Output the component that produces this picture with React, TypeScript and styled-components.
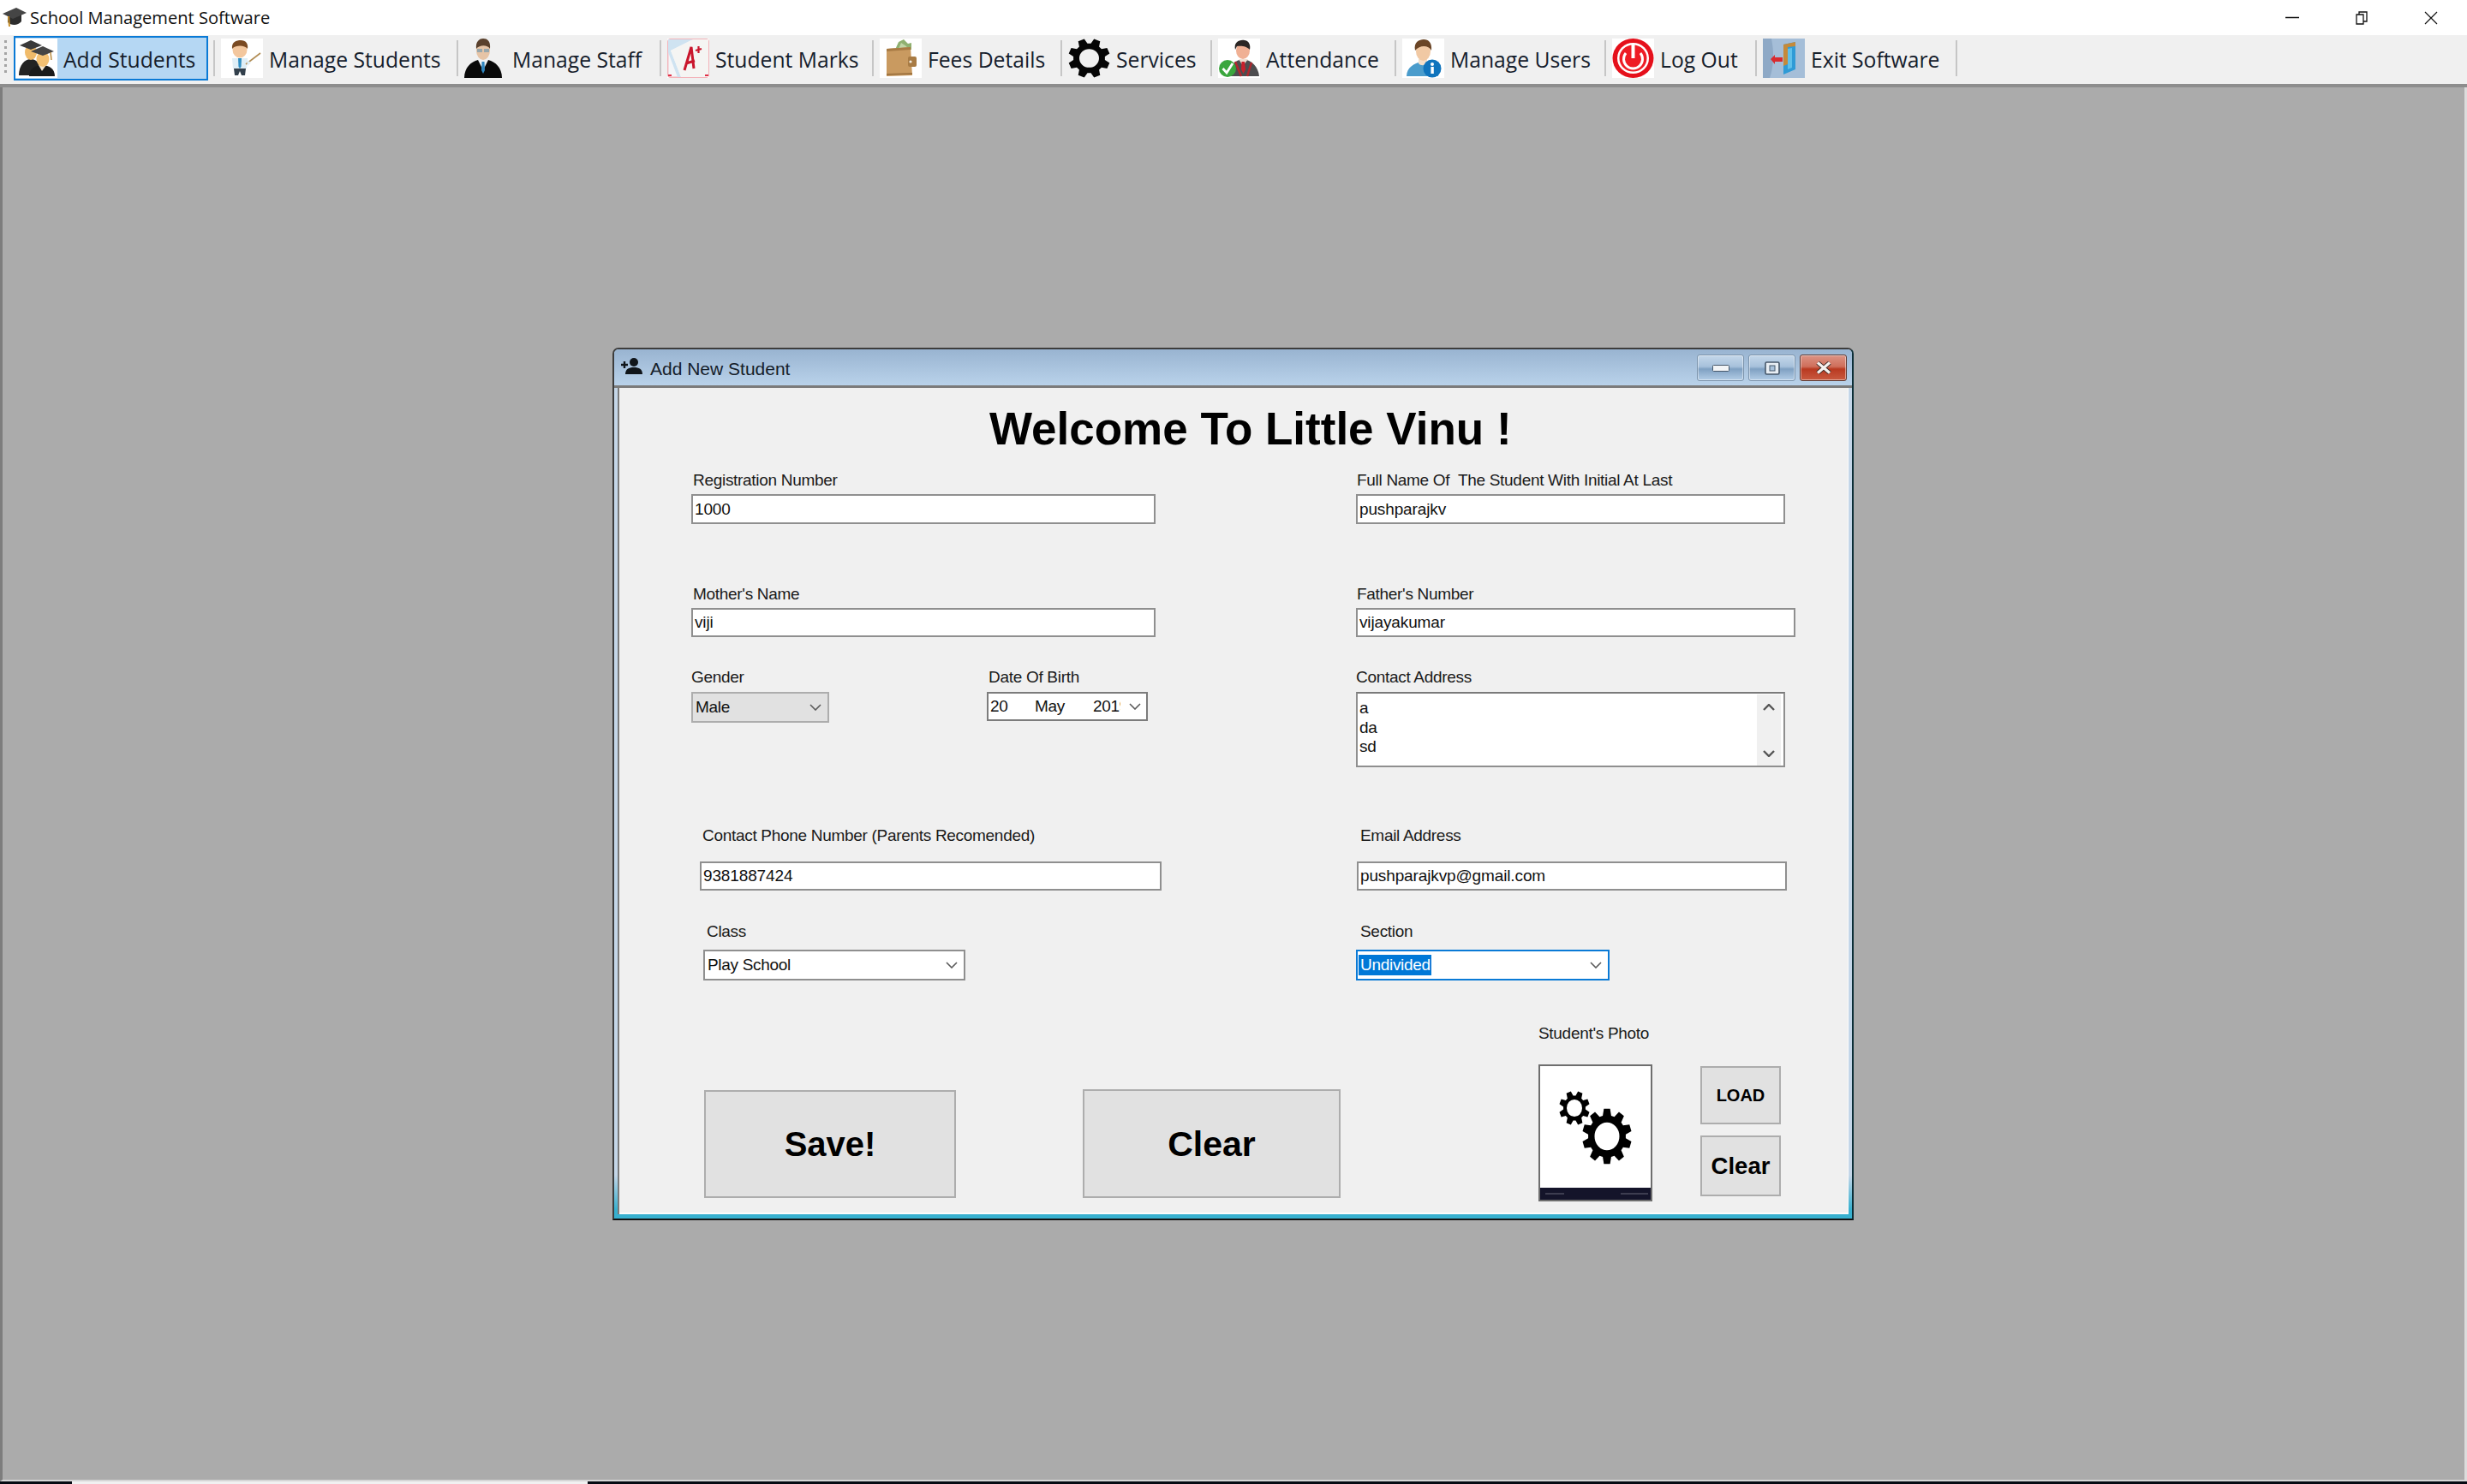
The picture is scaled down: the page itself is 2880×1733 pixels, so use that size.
import React from 'react'
import styled, { createGlobalStyle } from 'styled-components'

const GlobalStyle = createGlobalStyle`
    html, body {
        margin: 0;
        padding: 0;
        background: #ababab;
    }
    * {
        box-sizing: border-box;
    }
`;

const UI_FONT = `"Liberation Sans", Arial, sans-serif`;
const BAR_FONT = `"Open Sans", "Noto Sans", sans-serif`;

const Screen = styled.div`
    display: flex;
    flex-direction: column;
    width: 2880px;
    height: 1733px;
    overflow: hidden;
    font-family: ${UI_FONT};
`;

const AppTitleBar = styled.div`
    display: flex;
    align-items: center;
    height: 41px;
    flex: none;
    background: #fff;
    padding-left: 2px;
`;

const AppTitle = styled.span`
    font-family: ${BAR_FONT};
    font-size: 20.1px;
    margin-left: 3px;
    color: #111;
    white-space: nowrap;
`;

const AppControls = styled.div`
    display: flex;
    align-items: center;
    gap: 66px;
    margin-left: auto;
    margin-right: 34px;
`;

const Toolbar = styled.div`
    display: flex;
    align-items: center;
    flex: none;
    height: 61px;
    padding: 0 0 4px 5px;
    background: #f0f0f0;
    border-bottom: 4px solid #8d8d8d;
`;

const Grip = styled.div`
    width: 3px;
    height: 42px;
    margin-right: 8px;
    background: repeating-linear-gradient(to bottom, #a4a4a4 0 3px, transparent 3px 7px);
`;

const ToolButton = styled.div<{ $active?: boolean }>`
    display: flex;
    align-items: center;
    height: 52px;
    padding: 0 14px 0 2px;
    background: ${(p) => (p.$active ? '#b5d7f3' : 'transparent')};
    box-shadow: ${(p) => (p.$active ? 'inset 0 0 0 2px #0a7ad6' : 'none')};
`;

const ToolIcon = styled.div<{ $plain?: boolean }>`
    width: 49px;
    height: 46px;
    flex: none;
    background: ${(p) => (p.$plain ? 'transparent' : '#fff')};

    svg {
        display: block;
    }
`;

const ToolLabel = styled.span<{ $w: number }>`
    width: ${(p) => p.$w}px;
    margin-left: 7px;
    padding-top: 4px;
    font-family: ${BAR_FONT};
    font-size: 24.7px;
    color: #16202c;
    white-space: nowrap;
`;

const ToolSeparator = styled.div`
    width: 2px;
    height: 42px;
    margin: 0 5px 0 6px;
    flex: none;
    background: #c6c6c6;
`;

const Desk = styled.div`
    flex: 1;
    min-height: 0;
    padding: 304px 0 0 712px;
    background: #ababab;
    border-left: 3px solid #7d7d7d;
    border-right: 3px solid #dcdcdc;
    border-bottom: 2px solid #d6d6d6;
`;

const BottomStrip = styled.div`
    display: flex;
    height: 3px;
    flex: none;
`;

const StripPart = styled.div<{ $w?: number; $light?: boolean }>`
    width: ${(p) => (p.$w ? `${p.$w}px` : 'auto')};
    flex: ${(p) => (p.$w ? 'none' : '1')};
    background: ${(p) => (p.$light ? '#f1f1f1' : '#050a12')};
`;

const ChildWindow = styled.div`
    display: flex;
    flex-direction: column;
    width: 1449px;
    height: 1019px;
    padding: 0 4px 5px;
    border: 2px solid #3d3d3d;
    border-right-color: #0c2f38;
    border-bottom-color: #111;
    border-radius: 7px 7px 0 0;
    background: linear-gradient(to bottom, #c4d6e8 0, #c4d6e8 95%, #37b0cf 99%);
`;

const ChildTitleBar = styled.div`
    display: flex;
    align-items: flex-start;
    flex: none;
    height: 45px;
    margin: 0 -4px;
    padding: 6px 6px 0 7px;
    background: linear-gradient(to bottom, #99b4d1, #b9d2ea);
    border-bottom: 3px solid #7b7b7b;
    border-radius: 5px 5px 0 0;

    > svg {
        margin-top: 3px;
    }
`;

const ChildTitle = styled.span`
    margin: 5px 0 0 9px;
    font-size: 21px;
    color: #15202a;
`;

const CaptionGroup = styled.div`
    display: flex;
    gap: 5px;
    margin-left: auto;
`;

const CaptionButton = styled.div<{ $close?: boolean }>`
    display: flex;
    align-items: center;
    justify-content: center;
    width: 55px;
    height: 31px;
    border: 1px solid ${(p) => (p.$close ? '#5f3a33' : '#7d95ad')};
    border-radius: 3px;
    background: ${(p) =>
        p.$close
            ? 'linear-gradient(to bottom, #dc9384 0, #cf6f5b 45%, #b93a21 55%, #c95a40 100%)'
            : 'linear-gradient(to bottom, #c4d7ea 0, #a7c1db 45%, #7fa0c2 55%, #b3cde6 100%)'};
    box-shadow: inset 0 0 0 1px rgba(255, 255, 255, 0.45);
`;

const Client = styled.div`
    flex: 1;
    min-height: 0;
    background: #f0f0f0;
    box-shadow: inset 2px 0 0 #7b7b7b, inset -1px -2px 0 #fbfbfb;
`;

const Heading = styled.h1`
    height: 60px;
    margin: 18px 0 0;
    padding-left: 434px;
    font-size: 53px;
    font-weight: 700;
    line-height: 60px;
    color: #000;
    white-space: nowrap;
`;

const FormRow = styled.div<{ $top: number }>`
    display: grid;
    grid-template-columns: 862px 1fr;
    margin-top: ${(p) => p.$top}px;
`;

const ActionRow = styled.div<{ $top: number }>`
    display: flex;
    align-items: flex-start;
    margin-top: ${(p) => p.$top}px;
`;

const SplitCell = styled.div`
    display: flex;
    align-items: flex-start;
`;

const Field = styled.div<{ $x?: number; $gap?: number }>`
    display: flex;
    flex-direction: column;
    align-items: flex-start;
    gap: ${(p) => p.$gap ?? 6}px;
    margin-left: ${(p) => p.$x ?? 0}px;
`;

const FieldLabel = styled.label<{ $indent?: number }>`
    height: 20px;
    padding-left: ${(p) => p.$indent ?? 2}px;
    font-size: 19px;
    letter-spacing: -0.3px;
    line-height: 20px;
    color: #1a1a1a;
    white-space: pre;
`;

const TextBox = styled.div<{ $w: number; $h?: number }>`
    display: flex;
    align-items: center;
    width: ${(p) => p.$w}px;
    height: ${(p) => p.$h ?? 34}px;
    padding-left: 2px;
    background: #fff;
    border: 2px solid #8f8f8f;
    font-size: 19px;
    letter-spacing: -0.13px;
    color: #111;
    white-space: nowrap;
`;

const ComboBox = styled.div<{ $w: number; $disabled?: boolean; $focused?: boolean }>`
    display: flex;
    align-items: center;
    justify-content: space-between;
    width: ${(p) => p.$w}px;
    height: 36px;
    padding: 0 7px 0 1px;
    background: ${(p) => (p.$disabled ? '#e1e1e1' : '#fff')};
    border: 2px solid ${(p) => (p.$focused ? '#0a7ad6' : p.$disabled ? '#adadad' : '#8f8f8f')};
    font-size: 19px;
    letter-spacing: -0.3px;
    color: #111;
`;

const ComboText = styled.span<{ $selected?: boolean }>`
    padding: 0 1px 0 2px;
    line-height: 24px;
    background: ${(p) => (p.$selected ? '#0078d7' : 'transparent')};
    color: ${(p) => (p.$selected ? '#fff' : '#111')};
`;

const DatePicker = styled.div`
    display: flex;
    align-items: center;
    width: 188px;
    height: 34px;
    padding-left: 2px;
    background: #fff;
    border: 2px solid #7c7c7c;
    font-size: 19px;
    letter-spacing: -0.3px;
    color: #111;
`;

const DatePart = styled.span<{ $w: number }>`
    width: ${(p) => p.$w}px;
    flex: none;
    overflow: hidden;
    white-space: nowrap;
`;

const DateArrow = styled.span`
    display: flex;
    margin-left: 10px;
`;

const MemoBox = styled.div`
    display: flex;
    width: 501px;
    height: 88px;
    background: #fff;
    border: 2px solid #8f8f8f;
    border-top-color: #7a7a7a;
`;

const MemoText = styled.div`
    flex: 1;
    padding: 6px 0 0 2px;
    font-size: 19px;
    letter-spacing: -0.3px;
    line-height: 22.5px;
    color: #111;
`;

const MemoScroll = styled.div`
    display: flex;
    flex-direction: column;
    align-items: center;
    justify-content: space-between;
    width: 28px;
    margin: 1px 3px 0 0;
    padding: 11px 0 10px;
    background: #f0f0f0;
`;

const PushButton = styled.div<{ $w: number; $h: number; $size: number; $top?: number; $left?: number }>`
    display: flex;
    align-items: center;
    justify-content: center;
    flex: none;
    width: ${(p) => p.$w}px;
    height: ${(p) => p.$h}px;
    margin-top: ${(p) => p.$top ?? 0}px;
    margin-left: ${(p) => p.$left ?? 0}px;
    padding-top: 1px;
    background: #e1e1e1;
    border: 2px solid #adadad;
    font-size: ${(p) => p.$size}px;
    font-weight: 700;
    color: #000;
`;

const PhotoColumn = styled.div`
    display: flex;
    flex-direction: column;
    gap: 26px;
    margin-left: 231px;
`;

const PhotoFrame = styled.div`
    display: flex;
    flex-direction: column;
    width: 133px;
    height: 160px;
    background: #fff;
    border: 2px solid #6e6e6e;
`;

const PhotoArt = styled.div`
    flex: 1;
    min-height: 0;

    svg {
        display: block;
    }
`;

const PhotoFooter = styled.div`
    display: flex;
    align-items: center;
    justify-content: space-between;
    height: 14px;
    flex: none;
    padding: 0 3px 0 6px;
    background: #14142a;
`;

const FooterMark = styled.div<{ $w: number }>`
    width: ${(p) => p.$w}px;
    height: 2px;
    background: #3d3d50;
`;

const ButtonStack = styled.div`
    display: flex;
    flex-direction: column;
    gap: 13px;
    margin-left: 56px;
    margin-top: 48px;
`;

// icons

const gearPath = (cx: number, cy: number, ro: number, ri: number, hole: number, teeth: number, sy = 1) => {
    const pts: string[] = [];
    const step = (Math.PI * 2) / teeth;
    const at = (r: number, a: number) =>
        `${(cx + r * Math.cos(a)).toFixed(2)} ${(cy + r * sy * Math.sin(a)).toFixed(2)}`;
    for (let i = 0; i < teeth; i++) {
        const a = i * step + step / 2;
        pts.push(at(ri, a - step * 0.36), at(ro, a - step * 0.2), at(ro, a + step * 0.2), at(ri, a + step * 0.36));
    }
    const ry = hole * sy;
    return `M${pts.join('L')}Z M${cx - hole} ${cy}A${hole} ${ry} 0 1 0 ${cx + hole} ${cy}A${hole} ${ry} 0 1 0 ${cx - hole} ${cy}Z`;
};

const GradCapIcon = () => (
    <svg width="30" height="28" viewBox="0 0 30 28">
        <path d="M7 10 L7 19 C11 23 19 23 23 18 L23 9 Z" fill="#2d2d2d" />
        <path d="M1 9 L17 2 L29 8 L13 15 Z" fill="#454545" />
        <path d="M8 12 L9 24" stroke="#c8912e" strokeWidth="2" />
    </svg>
);

const AddStudentsIcon = () => (
    <svg width="49" height="46" viewBox="0 0 49 46">
        <path d="M4 43 C4 31 11 24 18 24 C25 24 31 31 31 43 Z" fill="#232323" />
        <ellipse cx="18" cy="16" rx="7" ry="9" fill="#f0bb6a" />
        <path d="M5 8 L18 2 L31 8 L18 13 Z" fill="#3a3a3a" />
        <path d="M16 44 C16 36 23 31 31 31 C40 31 46 36 46 44 Z" fill="#1b1b1b" />
        <path d="M27 31 L31 38 L36 31 Z" fill="#f6e7cf" />
        <ellipse cx="32" cy="24" rx="7.5" ry="9" fill="#f4c173" />
        <path d="M18 15 L32 9 L45 15 L32 20 Z" fill="#454545" />
        <path d="M41 16 L42 25" stroke="#b98a3c" strokeWidth="1.5" />
    </svg>
);

const TeacherIcon = () => (
    <svg width="49" height="46" viewBox="0 0 49 46">
        <path d="M13 23 L31 23 L30 35 L14 35 Z" fill="#dfeef6" />
        <path d="M20 23 L24 23 L23.5 33 L22 35 L20.5 33 Z" fill="#2f8fc4" />
        <path d="M15 35 L29 35 L28 43 L24 43 L22 38 L20 43 L16 43 Z" fill="#33404c" />
        <ellipse cx="22" cy="13" rx="8.5" ry="9.5" fill="#f3c79e" />
        <path d="M13 12 C12 4 18 2 23 2 C29 2 32 6 31 12 C28 8 18 7 13 12 Z" fill="#7a4a22" />
        <path d="M29 30 L46 17" stroke="#b28d55" strokeWidth="1.6" />
        <path d="M30 25 L35 28 L31 32 Z" fill="#dfeef6" />
    </svg>
);

const StaffIcon = () => (
    <svg width="49" height="46" viewBox="0 0 49 46">
        <path d="M0 46 C0 34 8 27 16 25 L28 25 C36 27 44 34 44 46 Z" fill="#0a0a0a" />
        <path d="M16 25 L22 37 L28 25 Z" fill="#eef2f5" />
        <path d="M20.5 27 L23.5 27 L24 37 L22 41 L20 37 Z" fill="#2f86c0" />
        <ellipse cx="22" cy="14" rx="8" ry="11" fill="#e6c4a6" />
        <path d="M14 12 C13 3 18 0 22 0 C27 0 31 3 30 12 C27 7 18 7 14 12 Z" fill="#59402c" />
        <rect x="15" y="12" width="6" height="4" fill="#8aa2ad" opacity="0.85" />
        <rect x="23" y="12" width="6" height="4" fill="#8aa2ad" opacity="0.85" />
    </svg>
);

const MarksIcon = () => (
    <svg width="49" height="46" viewBox="0 0 49 46">
        <rect x="0.7" y="0.7" width="47.6" height="44.6" rx="3" fill="#f4f6f8" stroke="#f3b4ba" strokeWidth="1.4" />
        <path d="M1 1 L30 1 L4 14 L16 45 L12 45 L1 16 Z" fill="#cfe3f1" />
        <path d="M4 14 L30 1 L48 1 L48 45 L16 45 Z" fill="#f5f5f3" />
        <path d="M20 37 L28 10 L31 35 M22 29 L32 26" stroke="#c9162c" strokeWidth="3" fill="none" />
        <path d="M33 14 L40 12 M36.5 9 L36.5 17" stroke="#c9162c" strokeWidth="2.2" />
        <path d="M44 43 L48 43 M1 43 L5 43" stroke="#e03047" strokeWidth="2" />
    </svg>
);

const WalletIcon = () => (
    <svg width="49" height="46" viewBox="0 0 49 46">
        <path d="M18 13 L22 4 L28 1 L33 6 L37 5 L37 13 Z" fill="#8fb070" />
        <path d="M22 12 L25 5 L31 9 L33 12 Z" fill="#c0d5a6" />
        <path d="M8 12 L36 10 L38 43 L8 44 Z" fill="#c99a60" />
        <path d="M8 12 L36 10 L36 13 L8 15 Z" fill="#a87b44" />
        <rect x="33" y="21" width="10" height="12" rx="2" fill="#a87b44" />
        <circle cx="36" cy="27" r="1.6" fill="#f2ece0" />
        <path d="M8 42 L38 41" stroke="#9f7440" strokeWidth="2" />
    </svg>
);

const GearIcon = () => (
    <svg width="49" height="46" viewBox="0 0 49 46">
        <path d={gearPath(24.5, 23, 24.5, 18.5, 11.5, 8, 0.94)} fill="#050505" fillRule="evenodd" />
    </svg>
);

const AttendanceIcon = () => (
    <svg width="49" height="46" viewBox="0 0 49 46">
        <path d="M13 44 C13 32 20 25 29 24 C39 25 47 33 48 44 Z" fill="#4d4d4f" />
        <path d="M24 24 L29 32 L35 24 Z" fill="#f1dfd2" />
        <path d="M27.5 27 L31 27 L32 36 L29.5 41 L27 36 Z" fill="#c8202c" />
        <path d="M20 27 L27 44 M39 28 L34 44" stroke="#b0282f" strokeWidth="2.5" />
        <ellipse cx="29" cy="14" rx="8" ry="10" fill="#f0b094" />
        <path d="M20 13 C18 4 25 1 31 2 C37 3 38 9 37 13 C34 9 27 8 22 9 Z" fill="#2b2624" />
        <circle cx="11" cy="35" r="10" fill="#3aa63d" />
        <path d="M5.5 35 L10 40 L17 29" stroke="#fff" strokeWidth="2.8" fill="none" />
    </svg>
);

const UsersIcon = () => (
    <svg width="49" height="46" viewBox="0 0 49 46">
        <path d="M5 44 C5 34 14 28 24 27 C34 28 42 33 42 44 Z" fill="#4a9ccc" />
        <path d="M19 24 L19 29 C21 32 27 32 29 29 L29 24 Z" fill="#f3dfca" />
        <ellipse cx="24.5" cy="15" rx="8.5" ry="11" fill="#f1c9a4" />
        <path d="M15 14 C13 4 20 1 25 1 C31 1 35 5 34 14 C31 8 21 7 15 14 Z" fill="#6a4526" />
        <circle cx="35" cy="35" r="10.5" fill="#0f74bd" />
        <rect x="33.4" y="33" width="3.4" height="8" fill="#fff" />
        <circle cx="35" cy="30" r="2" fill="#fff" />
    </svg>
);

const PowerIcon = () => (
    <svg width="49" height="46" viewBox="0 0 49 46">
        <ellipse cx="24.5" cy="23" rx="24" ry="23" fill="#e5101b" />
        <ellipse cx="24.5" cy="23" rx="18.5" ry="18" fill="#fff" />
        <ellipse cx="24.5" cy="23" rx="16" ry="15.5" fill="#ee1c25" />
        <path d="M16 17 A11 11 0 1 0 33 17" stroke="#fff" strokeWidth="3" fill="none" />
        <rect x="22.5" y="6" width="4" height="17" fill="#fff" />
    </svg>
);

const ExitIcon = () => (
    <svg width="49" height="46" viewBox="0 0 49 46">
        <rect width="49" height="46" fill="#a5bed8" />
        <path d="M0 0 L10 0 C13 15 13 32 8 46 L0 46 Z" fill="#8ea9c6" />
        <path d="M24 7 L38 4 L38 36 L24 42 Z" fill="#2f9bd6" />
        <path d="M24 7 L38 4 L38 9 L29 10 L29 30 L24 32 Z" fill="#c58a3a" />
        <path d="M29 12 L34 11 L34 34 L29 36 Z" fill="#5fc0ea" />
        <path d="M9 24 L14 19 L14 22 L23 22 L23 27 L14 27 L14 30 Z" fill="#d92a2f" />
    </svg>
);

const AddUserIcon = () => (
    <svg width="26" height="22" viewBox="0 0 26 22">
        <circle cx="16" cy="6" r="5" fill="#10151a" />
        <path d="M6 20 C6 14 10 12 16 12 C22 12 26 14 26 20 Z" fill="#10151a" />
        <path d="M1 9 L9 9 M5 5 L5 13" stroke="#10151a" strokeWidth="2.4" />
    </svg>
);

const Chevron = ({ up, w = 14, h = 8, sw = 1.6, color = '#5a5a5a' }: { up?: boolean; w?: number; h?: number; sw?: number; color?: string }) => (
    <svg width={w} height={h} viewBox="0 0 14 8" preserveAspectRatio="none">
        <path d={up ? 'M1 7 L7 1 L13 7' : 'M1 1 L7 7 L13 1'} stroke={color} strokeWidth={sw} fill="none" />
    </svg>
);

const tools = [
    { label: 'Add Students', w: 155, icon: <AddStudentsIcon />, active: true },
    { label: 'Manage Students', w: 199, icon: <TeacherIcon /> },
    { label: 'Manage Staff', w: 152, icon: <StaffIcon />, plain: true },
    { label: 'Student Marks', w: 163, icon: <MarksIcon /> },
    { label: 'Fees Details', w: 135, icon: <WalletIcon /> },
    { label: 'Services', w: 90, icon: <GearIcon />, plain: true },
    { label: 'Attendance', w: 130, icon: <AttendanceIcon /> },
    { label: 'Manage Users', w: 160, icon: <UsersIcon /> },
    { label: 'Log Out', w: 91, icon: <PowerIcon /> },
    { label: 'Exit Software', w: 149, icon: <ExitIcon /> },
];

const App: React.FC = () => {
    return (
        <Screen>
            <GlobalStyle />
            <AppTitleBar>
                <GradCapIcon />
                <AppTitle>School Management Software</AppTitle>
                <AppControls>
                    <svg width="16" height="3" viewBox="0 0 16 3">
                        <path d="M0 1.5 H16" stroke="#111" strokeWidth="1.5" />
                    </svg>
                    <svg width="14" height="16" viewBox="0 0 14 16">
                        <path d="M1 4 H9 V15 H1 Z M4 4 V1 H13 V12 H9" stroke="#111" strokeWidth="1.3" fill="none" />
                    </svg>
                    <svg width="16" height="16" viewBox="0 0 16 16">
                        <path d="M1 1 L15 15 M15 1 L1 15" stroke="#111" strokeWidth="1.2" />
                    </svg>
                </AppControls>
            </AppTitleBar>

            <Toolbar>
                <Grip />
                {tools.map((t) => (
                    <React.Fragment key={t.label}>
                        <ToolButton $active={t.active}>
                            <ToolIcon $plain={t.plain}>{t.icon}</ToolIcon>
                            <ToolLabel $w={t.w}>{t.label}</ToolLabel>
                        </ToolButton>
                        <ToolSeparator />
                    </React.Fragment>
                ))}
            </Toolbar>

            <Desk>
                <ChildWindow>
                    <ChildTitleBar>
                        <AddUserIcon />
                        <ChildTitle>Add New Student</ChildTitle>
                        <CaptionGroup>
                            <CaptionButton>
                                <svg width="20" height="8" viewBox="0 0 20 8">
                                    <rect x="0.5" y="0.5" width="19" height="7" rx="1" fill="#f2f4f6" stroke="#47586a" />
                                </svg>
                            </CaptionButton>
                            <CaptionButton>
                                <svg width="18" height="16" viewBox="0 0 18 16">
                                    <rect x="1" y="1" width="16" height="14" rx="1.5" fill="#e8eef4" stroke="#47586a" strokeWidth="1.6" />
                                    <rect x="6" y="5" width="6" height="6" fill="#a9c2db" stroke="#47586a" />
                                </svg>
                            </CaptionButton>
                            <CaptionButton $close>
                                <svg width="20" height="15" viewBox="0 0 20 15">
                                    <path d="M3 1.5 L17 13.5 M17 1.5 L3 13.5" stroke="#3c2a26" strokeWidth="5" />
                                    <path d="M3 1.5 L17 13.5 M17 1.5 L3 13.5" stroke="#f6f1ee" strokeWidth="3.2" />
                                </svg>
                            </CaptionButton>
                        </CaptionGroup>
                    </ChildTitleBar>

                    <Client>
                        <Heading>Welcome To Little Vinu !</Heading>

                        <FormRow $top={20}>
                            <Field $x={86}>
                                <FieldLabel>Registration Number</FieldLabel>
                                <TextBox $w={542} $h={35}>1000</TextBox>
                            </Field>
                            <Field>
                                <FieldLabel $indent={1}>Full Name Of  The Student With Initial At Last</FieldLabel>
                                <TextBox $w={501} $h={35}>pushparajkv</TextBox>
                            </Field>
                        </FormRow>

                        <FormRow $top={72}>
                            <Field $x={86}>
                                <FieldLabel>Mother's Name</FieldLabel>
                                <TextBox $w={542}>viji</TextBox>
                            </Field>
                            <Field>
                                <FieldLabel $indent={1}>Father's Number</FieldLabel>
                                <TextBox $w={513}>vijayakumar</TextBox>
                            </Field>
                        </FormRow>

                        <FormRow $top={37}>
                            <SplitCell>
                                <Field $x={86} $gap={7}>
                                    <FieldLabel $indent={0}>Gender</FieldLabel>
                                    <ComboBox $w={161} $disabled>
                                        <ComboText>Male</ComboText>
                                        <Chevron />
                                    </ComboBox>
                                </Field>
                                <Field $x={184} $gap={7}>
                                    <FieldLabel $indent={2}>Date Of Birth</FieldLabel>
                                    <DatePicker>
                                        <DatePart $w={52}>20</DatePart>
                                        <DatePart $w={68}>May</DatePart>
                                        <DatePart $w={32}>2019</DatePart>
                                        <DateArrow>
                                            <Chevron />
                                        </DateArrow>
                                    </DatePicker>
                                </Field>
                            </SplitCell>
                            <Field $gap={7}>
                                <FieldLabel $indent={0}>Contact Address</FieldLabel>
                                <MemoBox>
                                    <MemoText>
                                        a<br />da<br />sd
                                    </MemoText>
                                    <MemoScroll>
                                        <Chevron up sw={2.4} color="#555" />
                                        <Chevron sw={2.4} color="#555" />
                                    </MemoScroll>
                                </MemoBox>
                            </Field>
                        </FormRow>

                        <FormRow $top={70}>
                            <Field $x={96} $gap={20}>
                                <FieldLabel $indent={3}>Contact Phone Number (Parents Recomended)</FieldLabel>
                                <TextBox $w={539}>9381887424</TextBox>
                            </Field>
                            <Field $x={1} $gap={20}>
                                <FieldLabel $indent={4}>Email Address</FieldLabel>
                                <TextBox $w={502}>pushparajkvp@gmail.com</TextBox>
                            </Field>
                        </FormRow>

                        <FormRow $top={38}>
                            <Field $x={100} $gap={11}>
                                <FieldLabel $indent={4}>Class</FieldLabel>
                                <ComboBox $w={306}>
                                    <ComboText>Play School</ComboText>
                                    <Chevron />
                                </ComboBox>
                            </Field>
                            <Field $gap={11}>
                                <FieldLabel $indent={5}>Section</FieldLabel>
                                <ComboBox $w={296} $focused>
                                    <ComboText $selected>Undivided</ComboText>
                                    <Chevron />
                                </ComboBox>
                            </Field>
                        </FormRow>

                        <ActionRow $top={52}>
                            <PushButton $w={294} $h={126} $size={40} $top={76} $left={101}>Save!</PushButton>
                            <PushButton $w={301} $h={127} $size={41} $top={75} $left={148}>Clear</PushButton>
                            <PhotoColumn>
                                <FieldLabel $indent={0}>Student's Photo</FieldLabel>
                                <PhotoFrame>
                                    <PhotoArt>
                                        <svg width="129" height="142" viewBox="0 0 129 142">
                                            <path d={gearPath(40, 49, 18, 13, 9, 8, 1.12)} fill="#000" fillRule="evenodd" />
                                            <path d={gearPath(78, 82, 29, 22, 14.5, 10, 1.12)} fill="#000" fillRule="evenodd" />
                                        </svg>
                                    </PhotoArt>
                                    <PhotoFooter>
                                        <FooterMark $w={22} />
                                        <FooterMark $w={32} />
                                    </PhotoFooter>
                                </PhotoFrame>
                            </PhotoColumn>
                            <ButtonStack>
                                <PushButton $w={94} $h={68} $size={20}>LOAD</PushButton>
                                <PushButton $w={94} $h={71} $size={27.5}>Clear</PushButton>
                            </ButtonStack>
                        </ActionRow>
                    </Client>
                </ChildWindow>
            </Desk>

            <BottomStrip>
                <StripPart $w={84} />
                <StripPart $w={602} $light />
                <StripPart />
            </BottomStrip>
        </Screen>
    );
};

export default App;
